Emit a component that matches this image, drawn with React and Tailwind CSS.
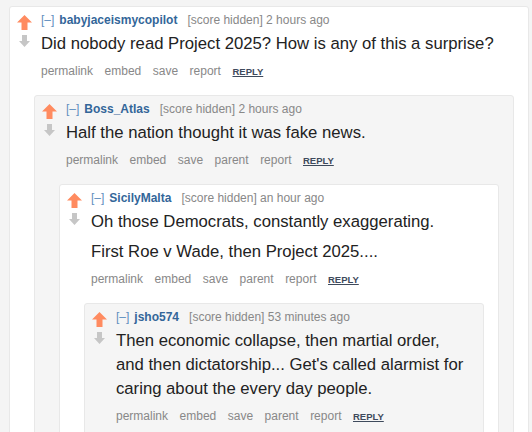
import React from "react";

const thread = {
  author: "babyjaceismycopilot",
  time: "2 hours ago",
  body: ["Did nobody read Project 2025? How is any of this a surprise?"],
  child: {
    author: "Boss_Atlas",
    time: "2 hours ago",
    body: ["Half the nation thought it was fake news."],
    child: {
      author: "SicilyMalta",
      time: "an hour ago",
      body: [
        "Oh those Democrats, constantly exaggerating.",
        "First Roe v Wade, then Project 2025....",
      ],
      child: {
        author: "jsho574",
        time: "53 minutes ago",
        body: [
          "Then economic collapse, then martial order, and then dictatorship... Get's called alarmist for caring about the every day people.",
        ],
      },
    },
  },
};

const UpArrow = () => (
  <svg width="15" height="15" viewBox="0 0 15 15">
    <path d="M7.5 0 L15 7.5 L10.5 7.5 L10.5 15 L4.5 15 L4.5 7.5 L0 7.5 Z" fill="#ff8b60" />
  </svg>
);

const DownArrow = () => (
  <svg width="11" height="12" viewBox="0 0 11 12" className="ml-[2px] mt-[5px]">
    <path d="M3 0 H8 V6 H11 L5.5 12 L0 6 H3 Z" fill="#c6c6c6" />
  </svg>
);

const Comment = ({ c, depth }) => {
  const buttons = depth === 0
    ? ["permalink", "embed", "save", "report"]
    : ["permalink", "embed", "save", "parent", "report"];

  return (
    <div
      className={
        depth % 2 === 0
          ? "border border-[#e8e8e8] rounded-[3px] bg-white pr-[14px] pb-[12px]"
          : "border border-[#e8e8e8] rounded-[3px] bg-[#f5f5f5] pr-[14px] pb-[12px]"
      }
    >
      <div className="flex pl-[7px]">
        {/* vote arrows */}
        <div className="w-[24px] shrink-0 pt-[8px] flex flex-col items-start">
          <UpArrow />
          <DownArrow />
        </div>

        <div className="flex-1 min-w-0 pt-[5px]">
          <div className="flex items-baseline text-[12px] leading-[16px] whitespace-nowrap">
            <span className="text-[#5f8fc0]">[–]</span>
            <span className="ml-[5px] font-bold text-[#336699]">{c.author}</span>
            <span className="ml-[10px] text-[#888]">[score hidden] {c.time}</span>
          </div>

          <div className="mt-[4px] flex flex-col gap-[6px] text-[16.7px] leading-[24px] text-[#222]">
            {c.body.map((p, i) => (
              <p key={i}>{p}</p>
            ))}
          </div>

          <div className="mt-[7px] flex items-baseline gap-[11.5px] text-[12px] leading-[16px] text-[#888]">
            {buttons.map((b) => (
              <span key={b}>{b}</span>
            ))}
            <span className="text-[9.5px] font-bold underline text-[#3e4a5c]">REPLY</span>
          </div>
        </div>
      </div>

      {c.child && (
        <div className="ml-[24px] mt-[15px]">
          <Comment c={c.child} depth={depth + 1} />
        </div>
      )}
    </div>
  );
};

export default function App() {
  return (
    <div className="w-full min-h-screen bg-[#f4f4f4] pt-[6px] pl-[9px] pr-[3px] font-['Liberation_Sans',Arial,sans-serif]">
      <Comment c={thread} depth={0} />
    </div>
  );
}
